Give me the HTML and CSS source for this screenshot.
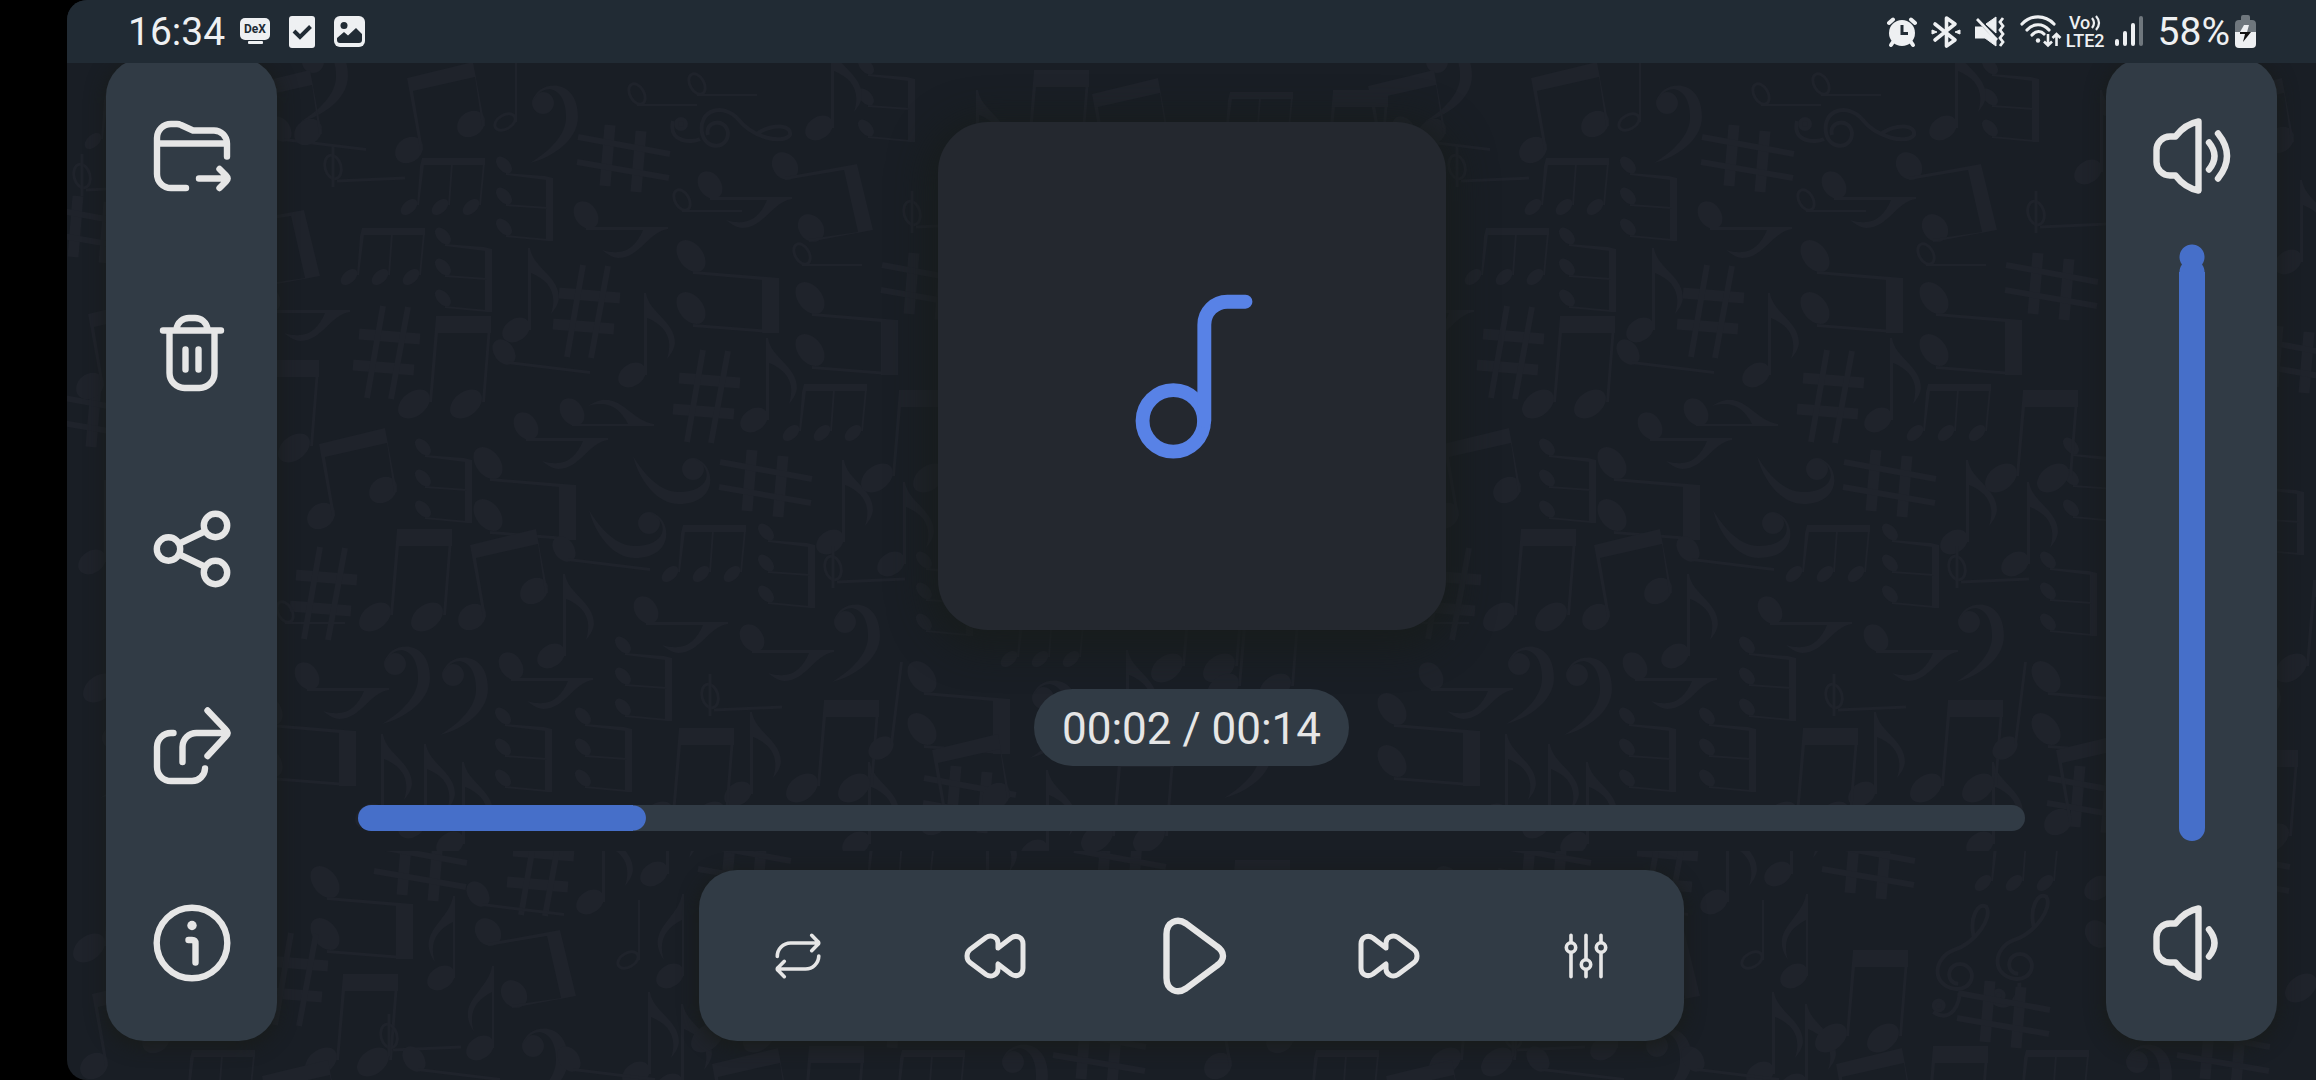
FILE: index.html
```html
<!DOCTYPE html>
<html lang="en">
<head>
<meta charset="utf-8">
<meta name="viewport" content="width=device-width, initial-scale=1">
<title>Audio player</title>
<link rel="stylesheet" href="styles.css">
</head>
<body>
<div class="app">
  <svg class="wallpaper" viewBox="67 62 2249 1018" preserveAspectRatio="xMinYMin slice" aria-hidden="true">
    <defs>
      <g id="pair"><ellipse cx="17" cy="88" rx="18" ry="12" transform="rotate(-38 17 88)"/><ellipse cx="69" cy="88" rx="18" ry="12" transform="rotate(-38 69 88)"/><path d="M39 0H94V17H41L35 86H32ZM91 10H94L88 86H85Z"/></g>
      <g id="slant"><ellipse cx="14" cy="86" rx="15" ry="12" transform="rotate(-38 14 86)"/><ellipse cx="76" cy="60" rx="15" ry="12" transform="rotate(-38 76 60)"/><path d="M12 14L78 -2L90 62H87L80 13L18 27L28 86H25Z"/></g>
      <g id="triple"><ellipse cx="9" cy="49" rx="10" ry="6" transform="rotate(-42 9 49)"/><ellipse cx="40" cy="49" rx="10" ry="6" transform="rotate(-42 40 49)"/><ellipse cx="71" cy="49" rx="10" ry="6" transform="rotate(-42 71 49)"/><path d="M22 0H85V7H24L19 47H17L20 8ZM51 5H53L50 47H48ZM83 5H85L81 47H79Z"/></g>
      <g id="eighth"><ellipse cx="14" cy="82" rx="15" ry="11" transform="rotate(-35 14 82)"/><path d="M26 0H28C31 20 57 28 57 50C56 58 52 62 49 66C56 44 46 32 29 25V82H26Z"/></g>
      <g id="eighth-left"><ellipse cx="14" cy="82" rx="15" ry="11" transform="rotate(-35 14 82)"/><path d="M26 0H28V82H26V26C10 34 2 46 8 66C-12 36 22 26 26 0Z"/></g>
      <g id="quarter"><ellipse cx="14" cy="86" rx="14" ry="10" transform="rotate(-38 14 86)"/><path d="M33 0H36L26 82H23Z"/></g>
      <g id="half"><ellipse cx="12" cy="60" rx="11" ry="7" fill="none" stroke="#1f232b" stroke-width="3" transform="rotate(-30 12 60)"/><path d="M22 0H24V60H22Z"/></g>
      <g id="cut" fill="none" stroke="#1f232b" stroke-width="3"><ellipse cx="10" cy="16" rx="8" ry="12" transform="rotate(-15 10 16)"/><path d="M10 -6V36M14 30L82 27"/></g>
      <g id="sharp" fill="none" stroke="#1f232b"><path stroke-width="11" d="M-14 -34L-19 27M17 -28L12 33"/><path stroke-width="6" d="M-46 -22L46 -5M-47 3L45 19"/></g>
      <g id="bass"><circle cx="13" cy="18" r="11"/><path d="M3 16C6 -4 48 -10 48 32C48 54 24 72 0 78C20 66 36 50 36 32C36 2 14 -4 3 16Z"/></g>
      <g id="treble" fill="none" stroke="#1f232b" stroke-width="4"><circle cx="11" cy="17" r="5" fill="#1f232b"/><path d="M3 14C-2 36 22 36 30 32M38 28C34 14 56 10 58 26C58 42 36 44 32 26C28 2 54 -4 68 12C82 30 112 38 120 28C122 18 104 16 88 26"/></g>

      <g id="upper" fill="#1f232b">
        <use href="#slant" x="395" y="64"/><use href="#half" x="493" y="62"/><use href="#bass" x="530" y="85"/>
        <use href="#sharp" x="624" y="159"/><use href="#treble" x="670" y="107"/>
        <use href="#half" transform="translate(697 82) rotate(90)"/><use href="#half" transform="translate(757 72) rotate(90)"/>
        <use href="#half" transform="translate(742 188) rotate(90)"/><use href="#half" transform="translate(862 242) rotate(90)"/>
        <use href="#cut" x="323" y="151"/><use href="#cut" x="902" y="197"/>
        <use href="#triple" x="400" y="158"/><use href="#triple" x="340" y="228"/><use href="#triple" x="782" y="384"/><use href="#triple" x="661" y="525"/>
        <use href="#triple" transform="translate(553 156) rotate(90)"/><use href="#triple" transform="translate(492 227) rotate(90)"/><use href="#triple" transform="translate(472 438) rotate(90)"/>
        <use href="#triple" transform="translate(915 57) rotate(90)"/><use href="#triple" transform="translate(815 523) rotate(90)"/><use href="#triple" transform="translate(973 551) rotate(90)"/><use href="#triple" transform="translate(996 437) rotate(90)"/>
        <use href="#triple" transform="translate(672 636) rotate(90)"/><use href="#triple" transform="translate(552 707) rotate(90)"/><use href="#triple" transform="translate(632 707) rotate(90)"/>
        <use href="#eighth" x="805" y="46"/><use href="#eighth" x="618" y="293"/><use href="#eighth" x="740" y="338"/><use href="#eighth" x="502" y="248"/>
        <use href="#eighth" x="816" y="460"/><use href="#eighth" x="877" y="482"/><use href="#eighth" x="537" y="574"/><use href="#eighth" x="355" y="734"/><use href="#eighth" x="398" y="744"/><use href="#eighth" x="436" y="762"/><use href="#eighth" x="724" y="712"/><use href="#eighth" x="842" y="762"/>
        <use href="#eighth" transform="translate(668 201) rotate(90)"/><use href="#eighth" transform="translate(792 171) rotate(90)"/><use href="#eighth" transform="translate(608 412) rotate(90)"/><use href="#eighth-left" transform="translate(654 398) rotate(90)"/>
        <use href="#eighth" transform="translate(728 596) rotate(90)"/><use href="#eighth" transform="translate(834 624) rotate(90)"/><use href="#eighth" transform="translate(593 652) rotate(90)"/><use href="#eighth" transform="translate(389 662) rotate(90)"/><use href="#eighth" transform="translate(350 284) rotate(90)"/>
        <use href="#slant" transform="translate(871 152) rotate(90)"/><use href="#slant" transform="translate(318 198) rotate(90)"/>
        <use href="#pair" transform="translate(779 239) rotate(90)"/><use href="#pair" transform="translate(898 281) rotate(90)"/><use href="#pair" transform="translate(576 446) rotate(90)"/><use href="#pair" transform="translate(356 692) rotate(90)"/><use href="#pair" transform="translate(1010 660) rotate(90)"/>
        <use href="#pair" x="397" y="316"/><use href="#pair" x="358" y="529"/><use href="#pair" x="860" y="390"/><use href="#pair" x="640" y="728"/><use href="#pair" x="785" y="700"/><use href="#pair" x="225" y="360"/>
        <use href="#slant" x="307" y="430"/><use href="#slant" x="458" y="531"/>
        <use href="#sharp" transform="translate(386 353) rotate(90)"/><use href="#sharp" transform="translate(586 312) rotate(90)"/><use href="#sharp" transform="translate(706 397) rotate(90)"/><use href="#sharp" transform="translate(323 594) rotate(90)"/><use href="#sharp" x="766" y="484"/><use href="#sharp" x="928" y="287"/>
        <use href="#quarter" transform="translate(590 338) rotate(90)"/><use href="#quarter" transform="translate(650 535) rotate(90)"/><use href="#quarter" transform="translate(366 115) rotate(90)"/><use href="#quarter" x="867" y="662"/>
        <use href="#bass" transform="translate(711 456) rotate(90)"/><use href="#bass" transform="translate(667 510) rotate(90)"/><use href="#bass" x="832" y="604"/><use href="#bass" x="382" y="646"/><use href="#bass" x="440" y="657"/>
        <use href="#cut" x="823" y="552"/><use href="#cut" x="700" y="680"/>

        <use href="#bass" x="300" y="44"/><use href="#slant" x="232" y="72"/><use href="#pair" x="170" y="90"/><use href="#triple" x="84" y="92"/>
        <use href="#sharp" x="92" y="230"/><use href="#cut" x="72" y="160"/><use href="#sharp" x="110" y="420"/><use href="#slant" x="76" y="300"/><use href="#eighth" x="78" y="480"/><use href="#pair" x="82" y="600"/><use href="#bass" x="100" y="720"/>
        <use href="#half" transform="translate(345 600) rotate(90)"/>
        <use href="#pair" x="995" y="70"/><use href="#eighth" x="950" y="90"/><use href="#slant" x="1080" y="80"/><use href="#triple" x="1000" y="610"/><use href="#bass" x="1030" y="680"/><use href="#eighth" x="1100" y="650"/><use href="#pair" x="1080" y="750"/><use href="#sharp" x="970" y="800"/><use href="#eighth" x="1020" y="770"/>
        <use href="#triple" transform="translate(1180 470) rotate(90)"/><use href="#slant" x="920" y="736"/>
        <use href="#pair" x="1150" y="580"/><use href="#sharp" x="1168" y="360"/><use href="#eighth" x="1150" y="180"/>
      </g>
      <g id="lower" fill="#1f232b">
        <use href="#pair" transform="translate(413 865) rotate(90)"/><use href="#sharp" x="421" y="868"/><use href="#sharp" transform="translate(540 870) rotate(90)"/>
        <use href="#eighth-left" x="427" y="896"/><use href="#eighth-left" x="466" y="966"/><use href="#quarter" transform="translate(564 880) rotate(90)"/><use href="#slant" transform="translate(574 918) rotate(90)"/>
        <use href="#eighth" x="576" y="820"/><use href="#half" x="616" y="900"/><use href="#eighth-left" x="656" y="894"/><use href="#eighth" x="640" y="792"/>
        <use href="#sharp" transform="translate(294 980) rotate(90)"/><use href="#pair" x="304" y="974"/><use href="#cut" x="379" y="1020"/><use href="#bass" x="520" y="1028"/>
        <use href="#eighth" x="622" y="992"/><use href="#eighth" x="655" y="1004"/><use href="#slant" x="700" y="1050"/><use href="#quarter" transform="translate(500 1045) rotate(90)"/><use href="#quarter" transform="translate(655 1045) rotate(90)"/>
        <use href="#sharp" x="745" y="866"/><use href="#sharp" x="1120" y="872"/><use href="#triple" x="850" y="834"/><use href="#eighth" x="960" y="806"/>
        <use href="#pair" x="770" y="1046"/><use href="#triple" x="880" y="1050"/><use href="#bass" x="1000" y="1044"/><use href="#sharp" x="1100" y="1052"/>
        <use href="#pair" x="72" y="860"/><use href="#slant" x="80" y="980"/><use href="#triple" x="170" y="1050"/><use href="#slant" x="250" y="1062"/><use href="#pair" x="1160" y="900"/>
        <use href="#treble" transform="translate(855 1000) rotate(-70)"/><use href="#treble" transform="translate(795 1010) rotate(-70)"/><use href="#sharp" x="880" y="1015"/><use href="#pair" x="690" y="950"/>
        <use href="#slant" transform="translate(1060 920) rotate(90)"/>
      </g>
      <clipPath id="first-row"><rect x="0" y="0" width="2400" height="851"/></clipPath>
      <clipPath id="second-row"><rect x="0" y="851" width="2400" height="300"/></clipPath>
    </defs>
    <g clip-path="url(#first-row)"><use href="#upper"/><use href="#upper" x="1124"/></g>
    <g clip-path="url(#second-row)"><use href="#lower"/><use href="#lower" x="1124"/></g>
  </svg>

  <header class="status">
    <div class="status-group">
      <time class="status-text">16:34</time>
      <div class="status-icons notices">
        <svg width="30" height="34" viewBox="0 0 30 34" role="img" aria-label="DeX"><rect y="3" width="30" height="22" rx="5" fill="#eef0f2"/><rect x="8" y="26" width="15" height="3" rx="1" fill="#eef0f2"/><text x="15" y="18" text-anchor="middle" class="dex">DeX</text></svg>
        <svg width="26" height="34" viewBox="0 0 26 34" aria-hidden="true"><rect y="1" width="26" height="32" rx="3" fill="#eef0f2"/><path d="M5 16L11 22L21.500 11.500" fill="none" stroke="#212b34" stroke-width="4"/></svg>
        <svg width="31" height="34" viewBox="0 0 31 34" aria-hidden="true"><rect y="1" width="31" height="31" rx="6" fill="#eef0f2"/><circle cx="10" cy="10.500" r="3.500" fill="#212b34"/><path d="M3 25V23L10 17L14 20.500L22 13L28 19V25Q28 28 25 28H6Q3 28 3 25Z" fill="#212b34"/></svg>
      </div>
    </div>
    <div class="status-group">
      <div class="status-icons">
        <svg width="30" height="34" viewBox="0 0 30 34" aria-hidden="true"><g stroke="#eef0f2" stroke-width="4" stroke-linecap="round"><path d="M2 8L6 4.500M28 8L24 4.500"/><path d="M6 27L4 30M24 27L26 30"/></g><circle cx="15" cy="18" r="13" fill="#eef0f2"/><path d="M15 10V18.500H21" fill="none" stroke="#212b34" stroke-width="3"/></svg>
        <svg width="30" height="34" viewBox="0 0 30 34" aria-hidden="true"><path d="M4 9L24 25L15.500 31V3L24 9L4 25" fill="none" stroke="#eef0f2" stroke-width="3.600" stroke-linejoin="round" stroke-linecap="round"/><path d="M1 15L6 17L1 19ZM29 15L24 17L29 19Z" fill="#eef0f2" stroke="#eef0f2"/></svg>
        <svg width="30" height="34" viewBox="0 0 30 34" aria-hidden="true"><path d="M0 12H7L21 25V31L10 23H0ZM11 9L21 2V18Z" fill="#eef0f2" stroke="#eef0f2"/><path d="M2 4L22 25" stroke="#eef0f2" stroke-width="2.800"/><path d="M28 3L25 7L28 11L25 15L28 19L25 23L28 27L25 31" fill="none" stroke="#eef0f2" stroke-width="2.800"/></svg>
      </div>
      <div class="network">
        <svg width="42" height="34" viewBox="0 0 42 34" aria-hidden="true"><g fill="none" stroke="#eef0f2" stroke-width="3.200" stroke-linecap="round"><path d="M2 9C11 -.500 25 -.500 34 9"/><path d="M7 15C13 8 23 8 29 15"/><path d="M12 20C16 15.500 21 15.500 24 19"/></g><circle cx="18" cy="25.500" r="2.200" fill="#eef0f2"/><path d="M28 19V30M24 26.500L28 30.500L32 26.500M36.500 31V19M32.500 23L36.500 19L40.500 23" fill="none" stroke="#eef0f2" stroke-width="2.600"/></svg>
        <div class="volte" role="img" aria-label="Voice over LTE 2">
          <span class="volte-top">Vo<svg width="10" height="16" viewBox="0 0 10 16" aria-hidden="true"><path d="M1 3Q5 8 1 13M5 1Q11 8 5 15" fill="none" stroke="#eef0f2" stroke-width="2.200"/></svg></span>
          <span>LTE2</span>
        </div>
        <svg class="signal" width="28" height="34" viewBox="0 0 28 34" aria-hidden="true"><g stroke="#eef0f2" stroke-width="4" stroke-linecap="round"><path d="M2 26V29M10 18V29M18 10V29"/><path stroke="#6f777d" d="M26 3V29"/></g></svg>
      </div>
      <div class="battery">
        <span class="status-text">58%</span>
        <svg width="21" height="34" viewBox="0 0 21 34" aria-hidden="true"><path d="M0 17V9Q0 5 4 5H6V2Q6 0 8 0H13Q15 0 15 2V5H17Q21 5 21 9V17Z" fill="#6f777d"/><path d="M0 17H21V29Q21 33 17 33H4Q0 33 0 29Z" fill="#eef0f2"/><path d="M9 10H14L12 17H5Z" fill="#eef0f2"/><path d="M5 17H16L8 27L10 19H5Z" fill="#111"/></svg>
      </div>
    </div>
  </header>

  <main class="stage">
    <nav class="panel" aria-label="File actions">
      <button class="tool" type="button" aria-label="Move"><svg class="icon" viewBox="0 0 80 80"><path d="M34 72H19A14 14 0 0 1 5 58V22A14 14 0 0 1 19 8H25Q27 8 29 9L41 14.500H62A13 13 0 0 1 75 27.500V40.500M5 27.500H75M47 62.500H74M67.500 53L74 59.500Q77 62.500 74 65.500L67.500 72"/></svg></button>
      <button class="tool" type="button" aria-label="Delete"><svg class="icon" viewBox="0 0 80 80"><path d="M11 17.500H69M17.500 17.500V60A15 15 0 0 0 32.500 75H47.500A15 15 0 0 0 62.500 60V17.500M24.500 16C25.500 9 31 5 37 5H43C49 5 54.500 9 55.500 16M33.500 36.500V56.500M46.500 36.500V56.500"/></svg></button>
      <button class="tool" type="button" aria-label="Share"><svg class="icon" viewBox="0 0 80 80"><circle cx="16.500" cy="40" r="11.700"/><circle cx="63.500" cy="16.500" r="11.700"/><circle cx="63.500" cy="63.500" r="11.700"/><path d="M27.500 34.500L52.500 22.500M27.500 45.500L52.500 57.500"/></svg></button>
      <button class="tool" type="button" aria-label="Open with"><svg class="icon" viewBox="0 0 80 80"><path d="M21.500 27H19A14 14 0 0 0 5 41V61A14 14 0 0 0 19 75H40A13 13 0 0 0 53 62.500M30.500 56V41A14 14 0 0 1 44.500 27H74M55.500 4.500L74 24Q77 27 74 30L55.500 50"/></svg></button>
      <button class="tool" type="button" aria-label="Information"><svg class="icon" viewBox="0 0 80 80"><circle cx="40" cy="40" r="35.300"/><circle class="dot" cx="40" cy="22.500" r="4.700"/><path d="M36.500 37H40Q43.500 37 43.500 40.500V59.500"/></svg></button>
    </nav>

    <section class="player" aria-label="Player">
      <div class="cover-area">
        <div class="cover">
          <svg class="cover-note" viewBox="0 0 160 160" aria-hidden="true"><circle cx="63" cy="121.500" r="28.800"/><path d="M92 121.500V31.500A21.500 21.500 0 0 1 113.500 10H130.500"/></svg>
        </div>
      </div>
      <div class="clock">00:02 / 00:14</div>
      <input class="seek" type="range" min="0" max="1000" value="173" aria-label="Position" style="--fill: 17.3%">
      <div class="controls">
        <button class="tool" type="button" aria-label="Repeat"><svg class="icon thin" viewBox="0 0 80 80"><path d="M19.300 40.500A13.300 13.300 0 0 1 32.500 27H60M53.700 19.300L60 25.700Q61.500 27 60 28.300L53.700 34.700M60.800 40A13.300 13.300 0 0 1 47.500 53H20M26.300 45.300L20 51.700Q18.500 53 20 54.300L26.300 60.700"/></svg></button>
        <button class="tool" type="button" aria-label="Rewind"><svg class="icon medium" viewBox="0 0 80 80"><path d="M15 33.500L31 21.500C36 18 43 21 43 27V32L56 22C61 18.500 68 21 68 28V52C68 59 61 61.500 56 58L43 48V53C43 59 36 62 31 58.500L15 46.500C11 43.500 11 36.500 15 33.500Z"/></svg></button>
        <button class="tool" type="button" aria-label="Play"><svg class="icon" viewBox="0 0 80 80"><path d="M14.500 18C14.500 6 25 1.500 34 7.500L65 30.500C73 36 73 44 65 49.500L34 72.500C25 78.500 14.500 74 14.500 62Z"/></svg></button>
        <button class="tool" type="button" aria-label="Fast forward"><svg class="icon medium" viewBox="0 0 80 80"><path transform="translate(80) scale(-1 1)" d="M15 33.500L31 21.500C36 18 43 21 43 27V32L56 22C61 18.500 68 21 68 28V52C68 59 61 61.500 56 58L43 48V53C43 59 36 62 31 58.500L15 46.500C11 43.500 11 36.500 15 33.500Z"/></svg></button>
        <button class="tool" type="button" aria-label="Equalizer"><svg class="icon thin" viewBox="0 0 80 80"><path d="M25 19.300V26M25 37V60.700M40 19.300V43M40 54V60.700M55 19.300V26M55 37V60.700"/><circle cx="25" cy="31.500" r="4.700"/><circle cx="40" cy="48.500" r="4.700"/><circle cx="55" cy="31.500" r="4.700"/></svg></button>
      </div>
    </section>

    <aside class="panel volume-panel" aria-label="Volume">
      <button class="tool" type="button" aria-label="Volume up"><svg class="icon" viewBox="0 0 80 80"><path d="M46.500 5.500Q33 8 23.500 20.500H18A13.500 13.500 0 0 0 4.500 34V46A13.500 13.500 0 0 0 18 59.500H23.500Q33 72 46.500 74.500ZM57 26.500Q68 40 57 53.500M66 17.500Q84 40 66 62.500"/></svg></button>
      <input class="volume" type="range" min="0" max="100" value="100" aria-label="Volume level">
      <button class="tool" type="button" aria-label="Volume down"><svg class="icon" viewBox="0 0 80 80"><path d="M46.500 5.500Q33 8 23.500 20.500H18A13.500 13.500 0 0 0 4.500 34V46A13.500 13.500 0 0 0 18 59.500H23.500Q33 72 46.500 74.500ZM57 26.500Q68 40 57 53.500"/></svg></button>
    </aside>
  </main>
</div>
</body>
</html>
```
FILE: styles.css
```css
:root {
  --blue: #466fc9;
  --panel: #313b45;
  --ink: #e6e6e6;
  --status-ink: #eef0f2;
  --gap: 39px;
}

* {
  box-sizing: border-box;
}

body {
  margin: 0;
  background: #000;
  color: var(--ink);
  font-family: Roboto, "Liberation Sans", sans-serif;
}

.app {
  position: relative;
  display: flex;
  flex-direction: column;
  min-height: 100vh;
  margin-left: 67px;
  overflow: hidden;
  border-radius: 20px 0 0 20px;
  background: #191e25;
}

/* Faint sheet-music pattern behind everything */
.wallpaper {
  position: absolute;
  top: 62px;
  left: 0;
  width: 100%;
  height: calc(100% - 62px);
}

.status {
  position: relative;
  z-index: 1;
  display: flex;
  justify-content: space-between;
  align-items: center;
  height: 63px;
  padding: 0 60px 0 61px;
  background: #212b34;
}

.status-group,
.status-icons,
.network,
.battery {
  display: flex;
  align-items: center;
}

.status-group {
  gap: 15px;
}

.status-icons {
  gap: 14px;
}

.notices {
  gap: 19px;
}

.network {
  gap: 2px;
}

.signal {
  margin-left: 6px;
}

.battery {
  gap: 5px;
}

.status-text {
  color: var(--status-ink);
  font-size: 39px;
  line-height: 46px;
}

.dex {
  fill: #212b34;
  font-size: 12px;
  font-weight: 700;
}

.volte {
  display: flex;
  flex-direction: column;
  align-items: center;
  width: 43px;
  color: var(--status-ink);
  font-size: 18px;
  font-weight: 500;
  line-height: 18px;
}

.volte-top {
  display: flex;
  align-items: center;
  gap: 1px;
}

.stage {
  position: relative;
  display: flex;
  flex: 1;
  padding: 0 var(--gap) var(--gap);
}

.panel,
.controls {
  display: flex;
  border-radius: 38px;
  background: var(--panel);
  box-shadow: 0 4px 18px 2px rgba(24, 28, 26, 0.9);
}

.panel {
  flex: 0 0 171px;
  flex-direction: column;
  margin-top: -5px;
}

.tool {
  display: flex;
  flex: 1;
  align-items: center;
  justify-content: center;
  padding: 0;
  border: 0;
  background: none;
  color: inherit;
}

.icon {
  width: 80px;
  height: 80px;
  fill: none;
  stroke: currentColor;
  stroke-width: 6.4;
  stroke-linecap: round;
  stroke-linejoin: round;
}

.icon.medium {
  stroke-width: 5;
}

.icon.thin {
  stroke-width: 3.6;
}

.dot {
  fill: currentColor;
  stroke: none;
}

.player {
  display: flex;
  flex: 1;
  flex-direction: column;
  align-items: center;
  gap: var(--gap);
  padding: 0 81px;
}

.cover-area {
  display: flex;
  flex: 1;
  padding: 59px 0 20px;
}

.cover {
  display: flex;
  align-items: center;
  justify-content: center;
  aspect-ratio: 1;
  min-width: 320px;
  border-radius: 50px;
  background: #24282f;
  box-shadow: 0 8px 36px 12px rgba(24, 28, 27, 0.85);
}

.cover-note {
  width: 171px;
  height: 171px;
  fill: none;
  stroke: #5882e6;
  stroke-width: 13;
  stroke-linecap: round;
}

.clock {
  height: 77px;
  padding: 0 28px;
  border-radius: 39px;
  background: var(--panel);
  font-size: 44px;
  line-height: 80px;
  white-space: nowrap;
}

.seek,
.volume {
  margin: 0;
  appearance: none;
  border-radius: 13px;
}

.seek {
  width: 100%;
  height: 26px;
  background:
    linear-gradient(var(--blue), var(--blue)) 0 0 / calc(var(--fill) - 13px) 100% no-repeat,
    radial-gradient(circle at calc(var(--fill) - 13px) 50%, var(--blue) 12px, transparent 13px),
    var(--panel);
}

.volume-panel .tool {
  flex: 0 0 196px;
}

.volume {
  flex: 1;
  align-self: center;
  width: 26px;
  margin: -10px 0 4px;
  writing-mode: vertical-lr;
  direction: rtl;
  background:
    radial-gradient(circle at 50% 13px, var(--blue) 12px, transparent 13px),
    radial-gradient(circle at 50% 28px, var(--blue) 12px, transparent 13px),
    linear-gradient(transparent 28px, var(--blue) 28px);
}

.seek::-webkit-slider-thumb,
.volume::-webkit-slider-thumb {
  width: 26px;
  height: 26px;
  appearance: none;
  background: transparent;
}

.controls {
  width: 985px;
  max-width: 100%;
  height: 171px;
}
```
